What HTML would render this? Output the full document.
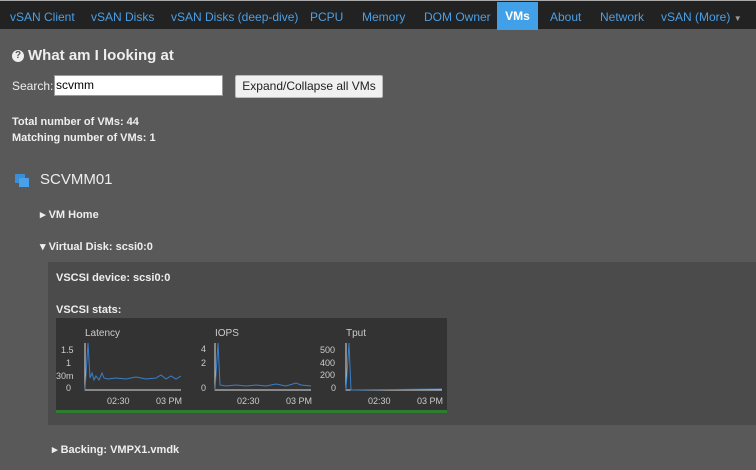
<!DOCTYPE html>
<html><head><style>
body{margin:0;width:756px;height:470px;overflow:hidden;background:#595959;font-family:"Liberation Sans",Arial,sans-serif;color:#eee;position:relative}
.nav{position:absolute;left:0;top:0;width:756px;height:28px;background:#222;border-top:1px solid #aaa}
.nav span{position:absolute;top:9px;font-size:12px;color:#4a9fe6}
.nav .act{background:#42a0e8;color:#fff;font-weight:bold;top:1px;height:28px;line-height:28px}
.t{position:absolute;font-size:11px;font-weight:bold;color:#eee;white-space:nowrap}
</style></head><body>
<div class="nav">
<span style="left:10px">vSAN Client</span>
<span style="left:91px">vSAN Disks</span>
<span style="left:171px">vSAN Disks (deep-dive)</span>
<span style="left:310px">PCPU</span>
<span style="left:362px">Memory</span>
<span style="left:424px">DOM Owner</span>
<span class="act" style="left:497px;width:41px;text-align:center">VMs</span>
<span style="left:550px">About</span>
<span style="left:600px">Network</span>
<span style="left:661px">vSAN (More) <span style="position:static;color:#999;font-size:8px">▼</span></span>
</div>
<div style="position:absolute;left:12px;top:50px;width:12px;height:12px;border-radius:50%;background:#eee;color:#555;font-size:10px;font-weight:bold;text-align:center;line-height:12px">?</div>
<div class="t" style="left:28px;top:47px;font-size:15px">What am I looking at</div>
<div class="t" style="left:12px;top:79px;font-weight:normal;font-size:12px">Search:</div>
<div style="position:absolute;left:54px;top:75px;width:166px;height:19px;background:#fff;border:1px solid #999;font-size:12px;color:#000;line-height:19px;padding-left:1px">scvmm</div>
<div style="position:absolute;left:235px;top:75px;width:146px;height:21px;background:#f0f0f0;border:1px solid #bbb;border-radius:2px;font-size:12px;color:#222;line-height:21px;text-align:center">Expand/Collapse all VMs</div>
<div class="t" style="left:12px;top:116px">Total number of VMs: 44</div>
<div class="t" style="left:12px;top:132px">Matching number of VMs: 1</div>
<div style="position:absolute;left:15px;top:174px;width:10px;height:9px;background:#3a8fd8"></div>
<div style="position:absolute;left:19px;top:178px;width:10px;height:9px;background:#4aa0e8"></div>
<div class="t" style="left:40px;top:171px;font-size:15px;font-weight:normal">SCVMM01</div>
<div class="t" style="left:40px;top:208px">▸ VM Home</div>
<div class="t" style="left:40px;top:240px">▾ Virtual Disk: scsi0:0</div>
<div style="position:absolute;left:48px;top:262px;width:708px;height:163px;background:#4b4b4b"></div>
<div class="t" style="left:56px;top:272px">VSCSI device: scsi0:0</div>
<div class="t" style="left:56px;top:304px">VSCSI stats:</div>
<div style="position:absolute;left:56px;top:318px;width:391px;height:92px;background:#333;border-bottom:3px solid #2e7d32"></div>
<svg style="position:absolute;left:56px;top:318px" width="391" height="92" font-family="Liberation Sans,Arial" font-size="9" fill="#ccc">
<text x="29" y="18" font-size="10">Latency</text><text x="159" y="18" font-size="10">IOPS</text><text x="290" y="18" font-size="10">Tput</text>
<text x="5" y="35">1.5</text><text x="10" y="48">1</text><text x="0" y="61">30m</text><text x="10" y="73">0</text>
<text x="145" y="34">4</text><text x="145" y="48">2</text><text x="145" y="73">0</text>
<text x="264" y="35">500</text><text x="264" y="48">400</text><text x="264" y="60">200</text><text x="275" y="73">0</text>
<g stroke="#ddd" fill="none"><path d="M29 25V72H125M159 25V72H255M290 25V72H386"/></g>
<text x="51" y="86">02:30</text><text x="100" y="86">03 PM</text>
<text x="181" y="86">02:30</text><text x="230" y="86">03 PM</text>
<text x="312" y="86">02:30</text><text x="361" y="86">03 PM</text>
<g stroke="#3a7fc8" fill="none" stroke-width="1"><path d="M29 72L32 25L34 60L36 55L38 62L40 58L43 62L46 55L48 60L52 61L60 60L70 61L80 59L90 61L100 60L105 57L110 61L115 58L120 61L125 58"/>
<path d="M159 72L162 25L164 67L170 68L180 67L190 68L200 67L210 68L220 66L230 68L240 65L245 67L255 68"/>
<path d="M290 72L293 25L295 72L386 71"/></g>
</svg>
<div class="t" style="left:52px;top:443px">▸ Backing: VMPX1.vmdk</div>
</body></html>
